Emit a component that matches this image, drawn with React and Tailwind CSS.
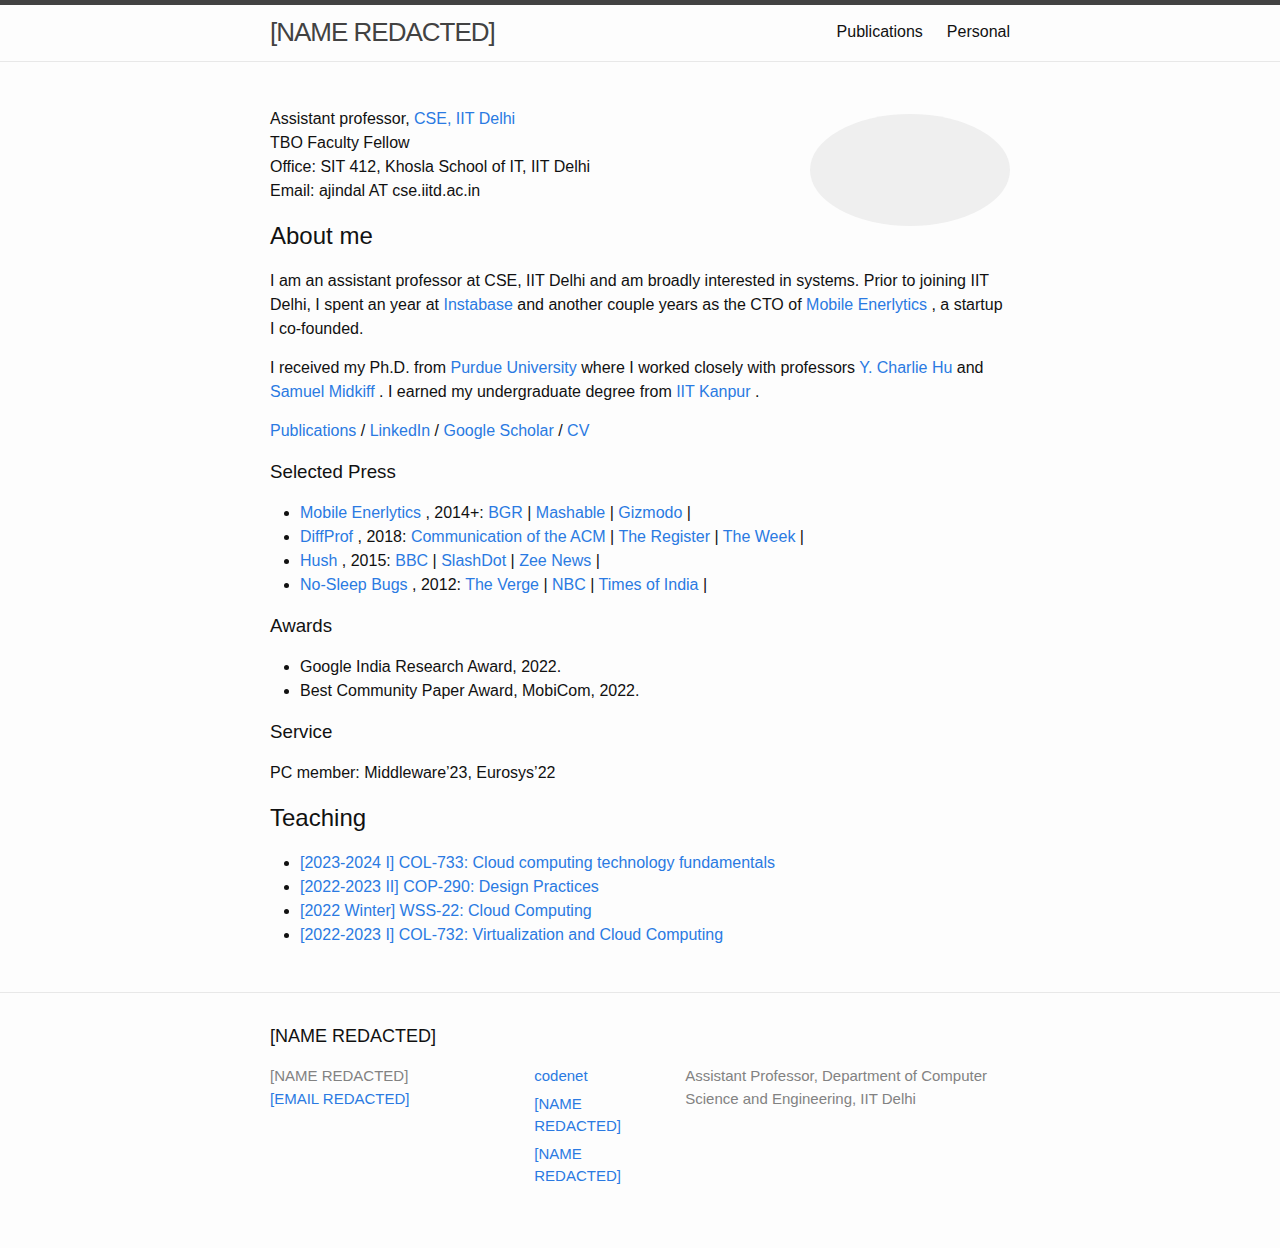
const link = 'text-[#2a7ae2] hover:underline';

function Press({ name, year, items }) {
  return (
    <li>
      <a href="#" className={link}>{name}</a> , {year}:{' '}
      {items.map((it) => (
        <span key={it}>
          <a href="#" className={link}>{it}</a> |{' '}
        </span>
      ))}
    </li>
  );
}

export default function App() {
  const h2 = 'text-[24px] leading-[36px] font-normal mb-[15px]';
  const h3 = 'text-[18.72px] leading-[28px] font-normal mb-[15px]';
  const ul = 'list-disc ml-[30px] mb-[15px]';

  return (
    <div className="min-h-screen bg-[#fdfdfd] text-[#111] text-[16px] leading-[24px] font-['Liberation_Sans',Arial,sans-serif]">
      <header className="border-t-[5px] border-t-[#424242] border-b border-b-[#e8e8e8] min-h-[62px]">
        <div className="max-w-[740px] mx-auto flex justify-between items-center">
          <a href="#" className="text-[26px] leading-[54px] font-light tracking-[-1px] text-[#424242]">
            [NAME REDACTED]
          </a>
          <nav className="flex gap-[24px] leading-[54px]">
            <a href="#" className="text-[#111]">Publications</a>
            <a href="#" className="text-[#111]">Personal</a>
          </nav>
        </div>
      </header>

      <main className="pt-[45px] pb-[30px]">
        <div className="max-w-[740px] mx-auto">
          <div className="float-right mt-[7px] w-[200px] h-[112px] rounded-[50%] bg-[#efefef]" />
          <p className="mb-[15px]">
            Assistant professor, <a href="#" className={link}>CSE, IIT Delhi</a>
            <br />
            TBO Faculty Fellow
            <br />
            Office: SIT 412, Khosla School of IT, IIT Delhi
            <br />
            Email: ajindal AT cse.iitd.ac.in
          </p>

          <h2 className={h2}>About me</h2>
          <p className="mb-[15px]">
            I am an assistant professor at CSE, IIT Delhi and am broadly interested in systems. Prior to joining IIT
            Delhi, I spent an year at <a href="#" className={link}>Instabase</a> and another couple years as the CTO of{' '}
            <a href="#" className={link}>Mobile Enerlytics</a> , a startup I co-founded.
          </p>
          <p className="mb-[15px]">
            I received my Ph.D. from <a href="#" className={link}>Purdue University</a> where I worked closely with
            professors <a href="#" className={link}>Y. Charlie Hu</a> and{' '}
            <a href="#" className={link}>Samuel Midkiff</a> . I earned my undergraduate degree from{' '}
            <a href="#" className={link}>IIT Kanpur</a> .
          </p>
          <p className="mb-[15px]">
            <a href="#" className={link}>Publications</a> / <a href="#" className={link}>LinkedIn</a> /{' '}
            <a href="#" className={link}>Google Scholar</a> / <a href="#" className={link}>CV</a>
          </p>

          <h3 className={h3}>Selected Press</h3>
          <ul className={ul}>
            <Press name="Mobile Enerlytics" year="2014+" items={['BGR', 'Mashable', 'Gizmodo']} />
            <Press name="DiffProf" year="2018" items={['Communication of the ACM', 'The Register', 'The Week']} />
            <Press name="Hush" year="2015" items={['BBC', 'SlashDot', 'Zee News']} />
            <Press name="No-Sleep Bugs" year="2012" items={['The Verge', 'NBC', 'Times of India']} />
          </ul>

          <h3 className={h3}>Awards</h3>
          <ul className={ul}>
            <li>Google India Research Award, 2022.</li>
            <li>Best Community Paper Award, MobiCom, 2022.</li>
          </ul>

          <h3 className={h3}>Service</h3>
          <p className="mb-[15px]">PC member: Middleware’23, Eurosys’22</p>

          <h2 className={h2}>Teaching</h2>
          <ul className={ul}>
            <li><a href="#" className={link}>[2023-2024 I] COL-733: Cloud computing technology fundamentals</a></li>
            <li><a href="#" className={link}>[2022-2023 II] COP-290: Design Practices</a></li>
            <li><a href="#" className={link}>[2022 Winter] WSS-22: Cloud Computing</a></li>
            <li><a href="#" className={link}>[2022-2023 I] COL-732: Virtualization and Cloud Computing</a></li>
          </ul>
        </div>
      </main>

      <footer className="border-t border-t-[#e8e8e8] py-[30px]">
        <div className="max-w-[740px] mx-auto">
          <h2 className="text-[18px] leading-[27px] mb-[15px]">[NAME REDACTED]</h2>
          <div className="flex -ml-[15px] text-[15px] leading-[22.5px] text-[#828282]">
            <div className="w-[35%] pl-[15px]">
              <div>[NAME REDACTED]</div>
              <div><a href="#" className={link}>[EMAIL REDACTED]</a></div>
            </div>
            <div className="w-[20%] pl-[15px] pr-[15px]">
              <ul className="flex flex-col gap-[6px] leading-[22px]">
                <li><a href="#" className={link}>codenet</a></li>
                <li><a href="#" className={link}>[NAME REDACTED]</a></li>
                <li><a href="#" className={link}>[NAME REDACTED]</a></li>
              </ul>
            </div>
            <div className="w-[45%] pl-[15px] pr-[15px]">
              <p>Assistant Professor, Department of Computer Science and Engineering, IIT Delhi</p>
            </div>
          </div>
        </div>
      </footer>
    </div>
  );
}
